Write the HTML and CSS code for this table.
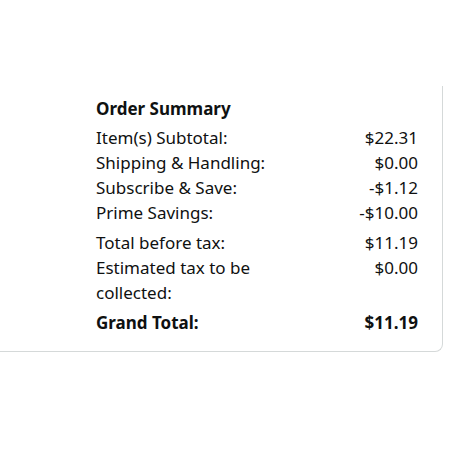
FILE: index.html
```html
<!DOCTYPE html>
<html>
<head>
<meta charset="utf-8">
<link rel="stylesheet" href="styles.css">
</head>
<body>
<div class="card">
  <h2 class="title">Order Summary</h2>
  <div class="group">
    <div class="row"><span>Item(s) Subtotal:</span><span>$22.31</span></div>
    <div class="row"><span>Shipping &amp; Handling:</span><span>$0.00</span></div>
    <div class="row"><span>Subscribe &amp; Save:</span><span>-$1.12</span></div>
    <div class="row"><span>Prime Savings:</span><span>-$10.00</span></div>
  </div>
  <div class="group">
    <div class="row"><span>Total before tax:</span><span>$11.19</span></div>
    <div class="row"><span class="label">Estimated tax to be collected:</span><span>$0.00</span></div>
  </div>
  <div class="group">
    <div class="row grand"><span>Grand Total:</span><span>$11.19</span></div>
  </div>
</div>
</body>
</html>
```
FILE: styles.css
```css
html, body { margin: 0; padding: 0; background: #fff; }
body {
  font-family: "Noto Sans", "Open Sans", sans-serif;
  color: #0f1111;
  font-size: 17px;
  line-height: 25px;
}
.card {
  margin-top: 86px;
  width: 443px;
  box-sizing: border-box;
  border-right: 1px solid #d5d9d9;
  border-bottom: 1px solid #d5d9d9;
  border-bottom-right-radius: 8px;
  padding: 10px 24px 16px 96px;
}
.title {
  margin: 0 0 4px;
  font-size: 17px;
  font-weight: 700;
  line-height: 25px;
}
.group { margin-bottom: 5px; }
.group:last-child { margin-bottom: 0; }
.row {
  display: flex;
  justify-content: space-between;
}
.label { max-width: 175px; }
.grand { font-weight: 700; }
```
